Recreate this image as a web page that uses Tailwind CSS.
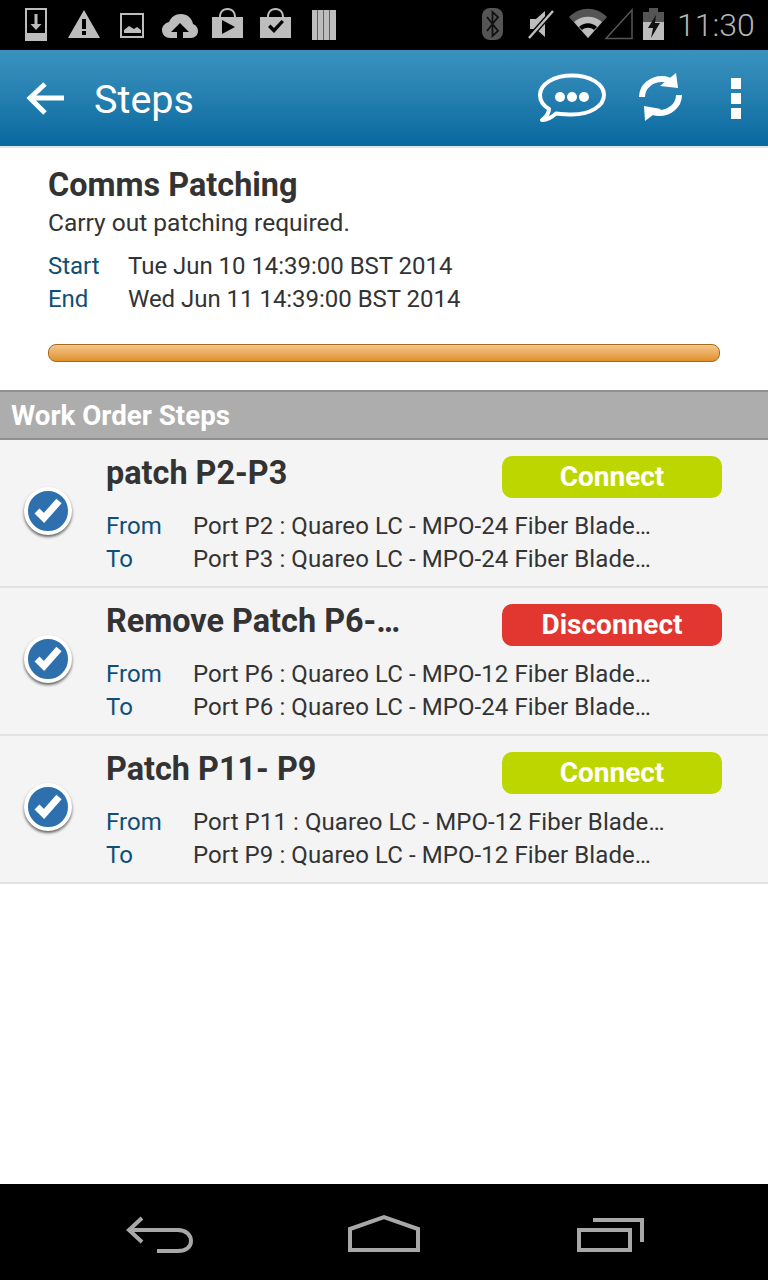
<!DOCTYPE html>
<html lang="en">
<head>
  <meta charset="UTF-8">
  <meta name="viewport" content="width=device-width, initial-scale=1.0">
  <title>Steps</title>
  <script src="https://cdn.jsdelivr.net/npm/@tailwindcss/browser@4"></script>
</head>
<body class="bg-white font-['Roboto',sans-serif] text-[#333]">
<div class="w-[768px] h-[1280px] flex flex-col overflow-hidden">

  <!-- Status bar -->
  <div class="h-[50px] shrink-0 bg-black flex items-center">
    <svg width="345" height="50" viewBox="0 0 345 50" class="shrink-0">
      <g fill="#bdbdbd">
        <path fill-rule="evenodd" d="M25 8h22v33H25zM27 10v23h18V10z"/>
        <path d="M34.500 14h3v10h4l-5.500 6-5.500-6h4z"/>
        <path fill-rule="evenodd" d="M84 10l16 28H68zM82 19v10h4V19zM82 31v4h4v-4z"/>
        <path fill-rule="evenodd" d="M120 13h24v25h-24zM122 15v21h20V15zM124 33v-3l5-4 5 3 3-2 4 3v3z"/>
        <path d="M170 38c-4 0-8-3-8-8 0-4 3-7 7-8 2-5 6-8 12-8 6 0 11 4 12 10 3 1 5 4 5 7 0 4-3 7-7 7z"/>
        <path fill-rule="evenodd" d="M212 17h7c0-5 3-9 8.500-9s8.500 4 8.500 9h7v21h-31zM221 17h13c0-4-2-7-6.500-7s-6.500 3-6.500 7zM222 20v14l13-7z"/>
        <path fill-rule="evenodd" d="M260 17h7c0-5 3-9 8.500-9s8.500 4 8.500 9h7v21h-31zM269 17h13c0-4-2-7-6.500-7s-6.500 3-6.500 7zM268 27l6 6 10-11-2.500-2-7.500 8-3.500-3.500z"/>
        <path d="M312 10h5.500v30H312zM318 10h5.500v30H318zM324 10h5.500v30H324zM330 10h6v30h-6z"/>
      </g>
      <path d="M180 23l-9 9h6v7h6v-7h6z" fill="#000"/>
    </svg>
    <svg width="288" height="50" viewBox="345 0 288 50" class="shrink-0">
      <rect x="482" y="8" width="21" height="32" rx="8" fill="#555"/>
      <path d="M487 17l11 14-5.500 5V12l5.500 5-11 14" fill="none" stroke="#111" stroke-width="1.800"/>
      <path d="M530 19h6l9-8v26l-9-8h-6z" fill="#bdbdbd"/>
      <path d="M529 38l24-27" stroke="#000" stroke-width="5"/>
      <path d="M529 38l24-27" stroke="#bdbdbd" stroke-width="2.500"/>
      <path d="M569 17c11-11 27-11 38 0l-19 21z" fill="#555"/>
      <path d="M574 22c8-7 20-7 28 0l-14 16z" fill="#bdbdbd"/>
      <path d="M579 27c5-5 13-5 18 0l-3 3c-3-3-9-3-12 0z" fill="#000"/>
      <path d="M606 38.500L632 10v28.500z" fill="none" stroke="#555" stroke-width="1.500"/>
    </svg>
    <svg width="45" height="50" viewBox="633 0 45 50" class="shrink-0">
      <rect x="649" y="8" width="9" height="4" fill="#555"/>
      <rect x="643" y="12" width="21" height="28" fill="#bdbdbd"/>
      <rect x="643" y="12" width="21" height="10" fill="#555"/>
      <path d="M656 15l-8 13h5l-2 10 9-15h-5z" fill="#111"/>
    </svg>
    <span class="text-[32px] font-light leading-none text-[#b5b5b5] ml-[-1px]">11:30</span>
  </div>

  <!-- App bar -->
  <div class="h-[96px] shrink-0 bg-gradient-to-b from-[#3a93bf] to-[#05699f] flex items-center">
    <svg width="94" height="96" viewBox="0 50 94 96" class="shrink-0">
      <path d="M64 98H31M45 84L30 98l15 15" fill="none" stroke="#fff" stroke-width="5"/>
    </svg>
    <span class="text-[39.500px] leading-none text-white pt-1">Steps</span>
    <div class="ml-auto flex items-center">
      <svg width="72" height="60" viewBox="536 70 72 60" class="shrink-0">
        <path d="M556 115.500C561 116 566 116.500 572 116.500 590 116.500 604 108 604 97 604 86 590 77.500 572 77.500 554 77.500 540 86 540 97 540 103 544 108 549 111 549 115 546 119 542 122 547 122.500 552 119 556 115.500Z" fill="none" stroke="#fff" stroke-width="4" stroke-linejoin="round"/>
        <circle cx="560" cy="99" r="5" fill="#fff"/>
        <circle cx="572" cy="99" r="5" fill="#fff"/>
        <circle cx="584" cy="99" r="5" fill="#fff"/>
      </svg>
      <svg width="48" height="60" viewBox="636 70 48 60" class="shrink-0 ml-[28px]">
        <path d="M642 99C642 88 652 81 662 81 666 81 669 82 671 84" fill="none" stroke="#fff" stroke-width="6"/>
        <path d="M676 75l2 15-18-2z" fill="#fff"/>
        <path d="M679 97C679 108 669 115 659 115 655 115 652 114 650 112" fill="none" stroke="#fff" stroke-width="6"/>
        <path d="M645 123l-1-15 17 3z" fill="#fff"/>
      </svg>
      <div class="w-[10px] ml-[47px] mr-[27px] flex flex-col gap-[4px] shrink-0">
        <div class="h-[11px] bg-white"></div>
        <div class="h-[11px] bg-white"></div>
        <div class="h-[11px] bg-white"></div>
      </div>
    </div>
  </div>

  <!-- Work order summary -->
  <div class="h-[244px] shrink-0 bg-white border-t-2 border-[#e4e4e4] pl-12 pr-12 pt-[19px]">
    <h1 class="text-[32.400px] font-bold leading-9 text-[#333]">Comms Patching</h1>
    <p class="text-[24.500px] leading-[30px] text-[#333] mt-[5px]">Carry out patching required.</p>
    <div class="grid grid-cols-[80px_1fr] text-[24px] leading-[33px] tracking-[-0.03px] mt-[12px]">
      <span class="text-[#0f4f77]">Start</span><span>Tue Jun 10 14:39:00 BST 2014</span>
      <span class="text-[#0f4f77]">End</span><span>Wed Jun 11 14:39:00 BST 2014</span>
    </div>
    <div class="h-[18px] mt-[28px] rounded-[8px] border border-[#a86a1c] bg-gradient-to-b from-[#f3c88a] to-[#e08f25]"></div>
  </div>

  <!-- Section header -->
  <div class="h-[50px] shrink-0 bg-[#adadad] border-y-2 border-[#8f8f8f] pl-[11px] pt-[2px] flex items-center text-[27.700px] font-bold text-white">Work Order Steps</div>

  <!-- Steps -->
  <div class="flex h-[148px] shrink-0 bg-[#f4f4f4] border-b-2 border-[#e2e2e2]">
    <div class="w-[106px] shrink-0 pl-6 self-center mb-[4px]">
      <div class="w-[48px] h-[48px] rounded-full bg-[#2e6fad] border-[4px] border-white shadow-[0_2px_3px_rgba(0,0,0,0.6)] flex items-center justify-center">
        <svg width="32" height="32" viewBox="0 0 32 32"><path d="M5 16l7 7L27 6" fill="none" stroke="#fff" stroke-width="7"/></svg>
      </div>
    </div>
    <div class="flex-1 min-w-0 pr-[46px] pt-[16px]">
      <div class="flex items-start justify-between h-[54px]">
        <h2 class="text-[32.400px] font-bold leading-[34px] text-[#333]">patch P2-P3</h2>
        <div class="w-[220px] h-[42px] rounded-[10px] bg-[#bed600] flex items-center justify-center text-[28px] font-bold text-white">Connect</div>
      </div>
      <div class="grid grid-cols-[87px_1fr] text-[24px] leading-[33px] tracking-[0.08px]">
        <span class="text-[#0f4f77]">From</span><span class="whitespace-nowrap">Port P2 : Quareo LC - MPO-24 Fiber Blade…</span>
        <span class="text-[#0f4f77]">To</span><span class="whitespace-nowrap">Port P3 : Quareo LC - MPO-24 Fiber Blade…</span>
      </div>
    </div>
  </div>

  <div class="flex h-[148px] shrink-0 bg-[#f4f4f4] border-b-2 border-[#e2e2e2]">
    <div class="w-[106px] shrink-0 pl-6 self-center mb-[4px]">
      <div class="w-[48px] h-[48px] rounded-full bg-[#2e6fad] border-[4px] border-white shadow-[0_2px_3px_rgba(0,0,0,0.6)] flex items-center justify-center">
        <svg width="32" height="32" viewBox="0 0 32 32"><path d="M5 16l7 7L27 6" fill="none" stroke="#fff" stroke-width="7"/></svg>
      </div>
    </div>
    <div class="flex-1 min-w-0 pr-[46px] pt-[16px]">
      <div class="flex items-start justify-between h-[54px]">
        <h2 class="text-[32.400px] font-bold leading-[34px] text-[#333]">Remove Patch P6-…</h2>
        <div class="w-[220px] h-[42px] rounded-[10px] bg-[#e23730] flex items-center justify-center text-[28px] font-bold text-white">Disconnect</div>
      </div>
      <div class="grid grid-cols-[87px_1fr] text-[24px] leading-[33px] tracking-[0.08px]">
        <span class="text-[#0f4f77]">From</span><span class="whitespace-nowrap">Port P6 : Quareo LC - MPO-12 Fiber Blade…</span>
        <span class="text-[#0f4f77]">To</span><span class="whitespace-nowrap">Port P6 : Quareo LC - MPO-24 Fiber Blade…</span>
      </div>
    </div>
  </div>

  <div class="flex h-[148px] shrink-0 bg-[#f4f4f4] border-b-2 border-[#e2e2e2]">
    <div class="w-[106px] shrink-0 pl-6 self-center mb-[4px]">
      <div class="w-[48px] h-[48px] rounded-full bg-[#2e6fad] border-[4px] border-white shadow-[0_2px_3px_rgba(0,0,0,0.6)] flex items-center justify-center">
        <svg width="32" height="32" viewBox="0 0 32 32"><path d="M5 16l7 7L27 6" fill="none" stroke="#fff" stroke-width="7"/></svg>
      </div>
    </div>
    <div class="flex-1 min-w-0 pr-[46px] pt-[16px]">
      <div class="flex items-start justify-between h-[54px]">
        <h2 class="text-[32.400px] font-bold leading-[34px] text-[#333]">Patch P11- P9</h2>
        <div class="w-[220px] h-[42px] rounded-[10px] bg-[#bed600] flex items-center justify-center text-[28px] font-bold text-white">Connect</div>
      </div>
      <div class="grid grid-cols-[87px_1fr] text-[24px] leading-[33px] tracking-[0.08px]">
        <span class="text-[#0f4f77]">From</span><span class="whitespace-nowrap">Port P11 : Quareo LC - MPO-12 Fiber Blade…</span>
        <span class="text-[#0f4f77]">To</span><span class="whitespace-nowrap">Port P9 : Quareo LC - MPO-12 Fiber Blade…</span>
      </div>
    </div>
  </div>

  <div class="flex-1 bg-white"></div>

  <!-- Nav bar -->
  <div class="h-[96px] shrink-0 bg-black">
    <svg width="768" height="96" viewBox="0 1184 768 96" class="block">
      <g fill="none" stroke="#a8a8a8" stroke-width="4">
        <path d="M142 1218l-13 12 13 12M129 1230H178C186 1230 191 1235 191 1241 191 1247 186 1251 178 1251H157"/>
        <path d="M350 1250V1229L384 1217 418 1229V1250Z"/>
        <path d="M579 1230h51v20h-51zM593 1220h49v22"/>
      </g>
    </svg>
  </div>
</div>
</body>
</html>
